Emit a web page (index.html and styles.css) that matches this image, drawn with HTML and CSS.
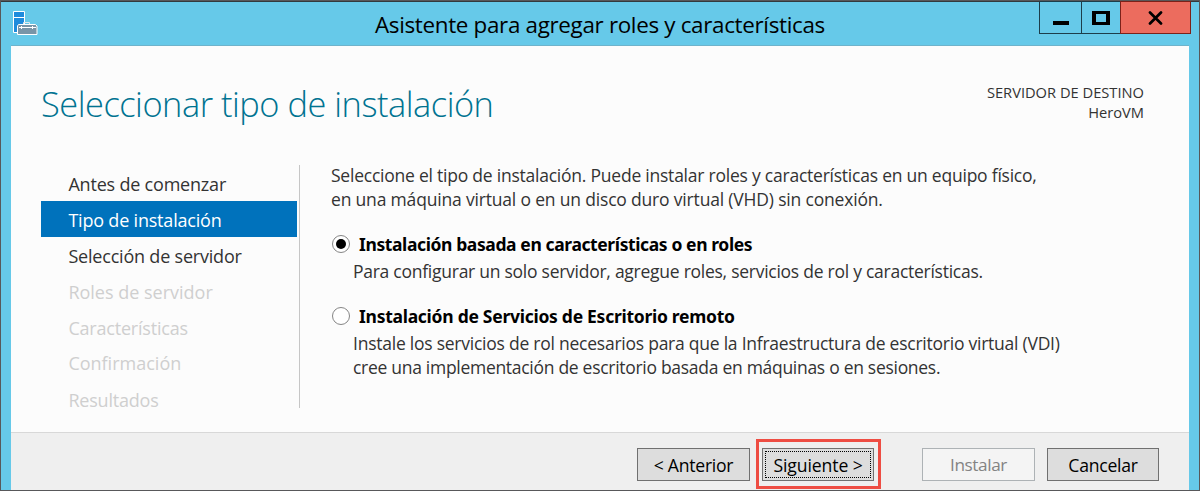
FILE: index.html
```
<!DOCTYPE html>
<html lang="es">
<head>
<meta charset="utf-8">
<title>Asistente para agregar roles y características</title>
<link rel="stylesheet" href="styles.css">
</head>
<body>
<div class="window">
  <header class="titlebar">
    <svg class="app-icon" width="26" height="26" viewBox="0 0 26 26">
      <path d="M1.500 1.500h11v21h-11z" fill="#1e8bdc" stroke="#fff"/>
      <path d="M1 7.500h12" stroke="#fff"/>
      <path d="M11.500 14v-1.500h6V14" fill="none" stroke="#dfe9ef"/>
      <path d="M6.500 14.500h17l1.500 1.500v8.500H5.500V16z" fill="#7895a8" stroke="#fff"/>
      <path d="M7 17.500h17M9.500 16v3M20.500 16v3" stroke="#fff"/>
    </svg>
    <h1 class="caption">Asistente para agregar roles y características</h1>
    <div class="controls">
      <button class="ctl ctl-min" aria-label="Minimizar"><svg width="16" height="14"><path d="M0 9h16v4H0z"/></svg></button>
      <button class="ctl ctl-max" aria-label="Maximizar"><svg width="18" height="14"><path d="M0 0h18v14H0zM4 3v8h10V3z" fill-rule="evenodd"/></svg></button>
      <button class="ctl ctl-close" aria-label="Cerrar"><svg width="16" height="14"><path d="M2 1.500l11 11M13 1.500l-11 11" stroke="#000" stroke-width="2.700" stroke-linecap="round"/></svg></button>
    </div>
  </header>
  <div class="client">
    <div class="page-head">
      <h2 class="page-title">Seleccionar tipo de instalación</h2>
      <div class="target"><span>SERVIDOR DE DESTINO</span><span>HeroVM</span></div>
    </div>
    <div class="body">
      <nav class="steps">
        <a class="step">Antes de comenzar</a>
        <a class="step active">Tipo de instalación</a>
        <a class="step">Selección de servidor</a>
        <a class="step disabled wide">Roles de servidor</a>
        <a class="step disabled">Características</a>
        <a class="step disabled wide raised">Confirmación</a>
        <a class="step disabled">Resultados</a>
      </nav>
      <main class="content">
        <p class="intro">Seleccione el tipo de instalación. Puede instalar roles y características en un equipo físico,<br><span class="loose">en una máquina virtual o en un disco duro virtual (VHD) sin conexión.</span></p>
        <label class="option">
          <span class="radio checked"></span>
          <b class="option-name first">Instalación basada en características o en roles</b>
        </label>
        <p class="desc">Para configurar un solo servidor, agregue roles, servicios de rol y características.</p>
        <label class="option">
          <span class="radio"></span>
          <b class="option-name">Instalación de Servicios de Escritorio remoto</b>
        </label>
        <p class="desc"><span class="vdi">Instale los servicios de rol necesarios para que la Infraestructura de escritorio virtual (VDI)</span><br><span class="tight">cree una implementación de escritorio basada en máquinas o en sesiones.</span></p>
      </main>
    </div>
    <footer class="footer">
      <button class="btn">&lt; Anterior</button>
      <div class="highlight"><button class="btn focused">Siguiente &gt;</button></div>
      <button class="btn off">Instalar</button>
      <button class="btn">Cancelar</button>
    </footer>
  </div>
</div>
</body>
</html>
```
FILE: styles.css
```
* { box-sizing: border-box; }
body {
  margin: 0;
  font-family: "Open Sans", "Noto Sans", sans-serif;
  font-size: 17.5px;
  color: #333;
}
h1, h2, p { margin: 0; font-weight: 400; }
button { font-family: inherit; padding: 0; margin: 0; }

.window {
  height: 491px;
  display: flex;
  flex-direction: column;
  background: #66c9e9;
  border: 1px solid #58585a;
  padding: 0 10px;
}
.titlebar {
  height: 44px;
  margin: 0 -10px;
  padding-left: 11px;
  display: flex;
  justify-content: space-between;
  align-items: flex-start;
  border-top: 1px solid #333a3e;
}
.app-icon { margin-top: 8px; }
.caption {
  font-size: 22.4px;
  letter-spacing: -0.32px;
  line-height: 30px;
  color: #000;
  padding: 8px 0 0 337px;
  margin-right: auto;
  white-space: nowrap;
}
.controls {
  display: flex;
  height: 33px;
  margin: -1px 8px 0 0;
}
.ctl {
  display: flex;
  align-items: center;
  justify-content: center;
  border: 1px solid #1d3d4a;
  border-right: 0;
  background: #66c9e9;
}
.ctl-min { width: 42px; }
.ctl-max { width: 39px; }
.ctl-close {
  width: 71px;
  background: #ec6c5e;
  border: 1px solid #7c2119;
}
.ctl-min svg { margin-top: 2px; }

.client {
  flex: 1;
  display: flex;
  flex-direction: column;
  background: #fcfcfc;
  border-top: 1px solid #6fb3cb;
}
.page-head {
  display: flex;
  justify-content: space-between;
  height: 118px;
  padding: 36px 45px 0 30px;
}
.page-title {
  font-size: 34.4px;
  letter-spacing: -0.48px;
  font-weight: 300;
  line-height: 44px;
  color: #007391;
}
.target {
  display: flex;
  flex-direction: column;
  align-items: flex-end;
  font-size: 14.68px;
  line-height: 20px;
}
.body { display: flex; height: 268px; }
.steps {
  width: 289px;
  height: 243px;
  margin-top: 1px;
  padding-left: 30px;
  border-right: 1px solid #c6c6c6;
}
.step {
  display: block;
  width: 256px;
  height: 36px;
  padding: 1px 0 0 27.4px;
  font-size: 18px;
  letter-spacing: -0.2px;
  line-height: 36px;
}
.step.active { background: #0072bc; color: #fff; }
.step.disabled { color: #cfcfcf; }
.step.wide { letter-spacing: 0; }
.step.raised { padding-top: 0; }

.content { margin-top: -1px; padding-left: 31px; line-height: 24px; white-space: nowrap; }
.intro { letter-spacing: -0.23px; }
.loose { letter-spacing: -0.18px; }
.option {
  display: flex;
  align-items: center;
  height: 24px;
  margin-top: 21px;
}
.radio {
  width: 18px;
  height: 18px;
  margin: 0 9px 0 1px;
  border: 1px solid #858585;
  border-radius: 50%;
  display: grid;
  place-items: center;
  background: #fff;
}
.radio.checked::after {
  content: "";
  width: 10px;
  height: 10px;
  border-radius: 50%;
  background: #000;
}
.option-name {
  font-family: "Noto Sans", "Open Sans", sans-serif;
  font-size: 17.5px;
  letter-spacing: -0.27px;
  color: #000;
}
.option-name.first { letter-spacing: -0.39px; }
.desc { padding: 3px 0 0 22px; letter-spacing: -0.26px; }
.vdi { letter-spacing: -0.24px; }
.tight { letter-spacing: -0.29px; }

.footer {
  flex: 1;
  display: flex;
  align-items: flex-start;
  background: #efefef;
  border-top: 1px solid #d8d8d8;
  padding: 6px 30px 0 626px;
}
.btn {
  width: 113px;
  height: 33px;
  margin-top: 9px;
  padding-top: 1px;
  border: 1px solid #707070;
  background: #ddd;
  color: #000;
  font-size: 17.6px;
  letter-spacing: -0.25px;
  line-height: 30px;
}
.btn:last-child { width: 112px; }
.btn.off {
  background: #f4f4f4;
  border-color: #adb2b5;
  color: #838383;
  font-size: 17.2px;
  letter-spacing: -0.4px;
  margin-right: 12px;
}
.highlight {
  width: 125px;
  height: 50px;
  margin: 0 41px 0 6px;
  padding: 6px 3px;
  border: 3px solid #ee4d43;
}
.btn.focused {
  width: 112px;
  margin: 0;
  letter-spacing: -0.1px;
  outline: 1px dotted #000;
  outline-offset: -4px;
}
```
